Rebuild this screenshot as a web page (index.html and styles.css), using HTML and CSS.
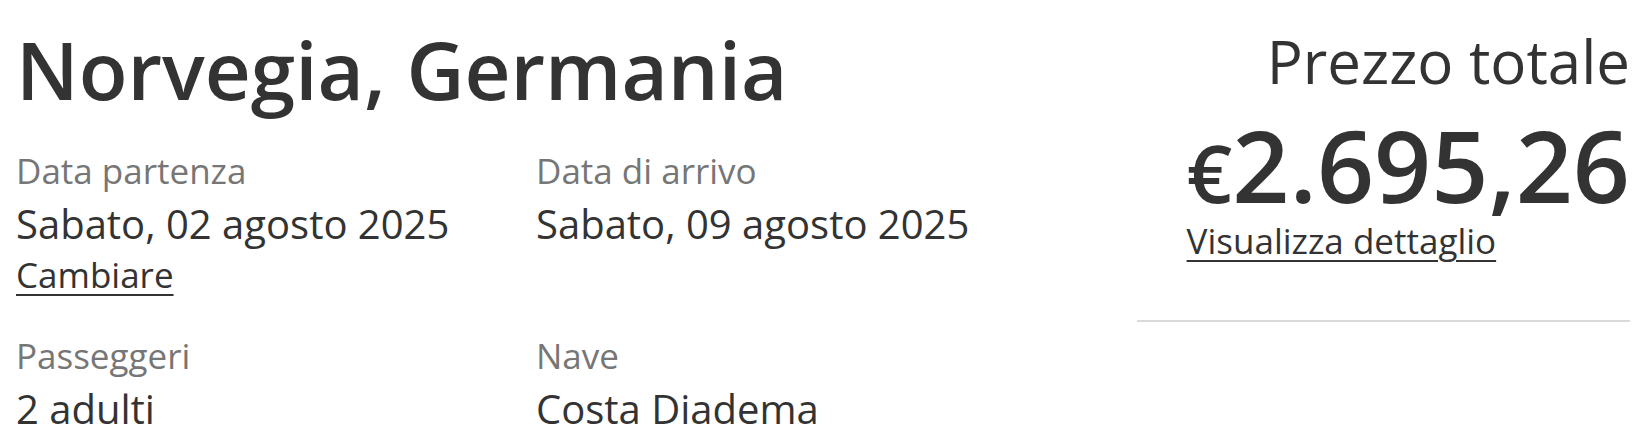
FILE: index.html
```html
<!DOCTYPE html>
<html lang="it">
<head>
    <meta charset="UTF-8">
    <meta name="viewport" content="width=device-width, initial-scale=1.0">
    <title>Riepilogo crociera</title>
    <link rel="stylesheet" href="styles.css">
</head>
<body>
    <div class="summary">
        <div class="tripInfo">
            <h1 class="tripTitle">Norvegia, Germania</h1>

            <div class="infoGrid">
                <div class="infoItem">
                    <span class="label">Data partenza</span>
                    <span class="value">Sabato, 02 agosto 2025</span>
                    <a href="#" class="link">Cambiare</a>
                </div>
                <div class="infoItem">
                    <span class="label">Data di arrivo</span>
                    <span class="value">Sabato, 09 agosto 2025</span>
                </div>
                <div class="infoItem">
                    <span class="label">Passeggeri</span>
                    <span class="value">2 adulti</span>
                </div>
                <div class="infoItem">
                    <span class="label">Nave</span>
                    <span class="value">Costa Diadema</span>
                </div>
            </div>
        </div>

        <div class="priceBox">
            <div class="priceTitle">Prezzo totale</div>
            <div class="priceAmount">
                <span class="amount"><span class="currency">€</span>2.695,26</span>
                <a href="#" class="link">Visualizza dettaglio</a>
            </div>
            <hr class="divider">
        </div>
    </div>
</body>
</html>
```

FILE: styles.css
```css
body {
    margin: 0;
    font-family: "Open Sans", "Liberation Sans", sans-serif;
    color: #333333;
    background-color: #fff;
}

.summary {
    display: grid;
    grid-template-columns: 1fr 493px;
    gap: 80px;
    padding: 21px 20px 0 16px;
}

.tripTitle {
    margin: 0 0 30px 0;
    font-size: 80px;
    font-weight: 600;
    line-height: 96px;
    color: #333333;
}

.infoGrid {
    display: grid;
    grid-template-columns: 520px 520px;
    row-gap: 35px;
}

.infoItem {
    display: flex;
    flex-direction: column;
    align-items: flex-start;
}

.label {
    font-size: 35px;
    line-height: 48px;
    color: #767676;
}

.value {
    font-size: 40px;
    line-height: 58px;
}

.link {
    font-size: 35px;
    line-height: 44px;
    color: #333333;
    text-decoration: underline;
    text-underline-offset: 6px;
    text-decoration-thickness: 2px;
}

/* colonna prezzo */
.priceBox {
    display: flex;
    flex-direction: column;
    align-items: flex-end;
    padding-top: 4px;
}

.priceTitle {
    font-size: 60px;
    line-height: 72px;
    color: #333333;
}

.priceAmount {
    display: flex;
    flex-direction: column;
    align-items: flex-start;
    margin-top: 20px;
}

.amount {
    font-size: 100px;
    font-weight: 600;
    line-height: 94px;
}

.currency {
    font-size: 80px;
}

.divider {
    align-self: stretch;
    margin: 57px 0 0 0;
    border: none;
    border-top: 2px solid #dadada;
}
```
